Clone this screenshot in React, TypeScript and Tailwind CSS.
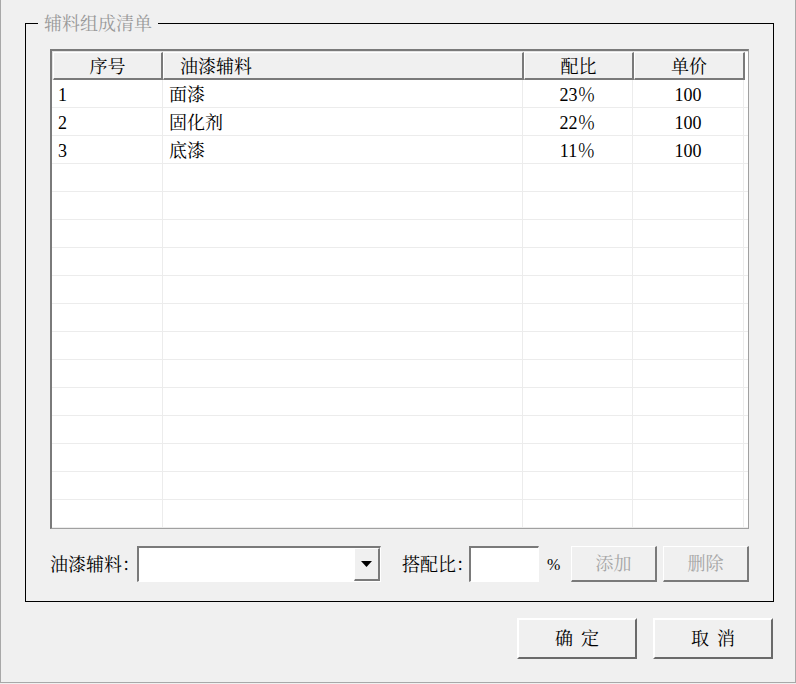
import React from "react";

const FONT = { fontFamily: '"Liberation Serif", "Noto Serif CJK SC", "Noto Sans CJK SC", serif' };

const rows = [
  { id: "1", name: "面漆", ratio: "23％", price: "100" },
  { id: "2", name: "固化剂", ratio: "22％", price: "100" },
  { id: "3", name: "底漆", ratio: "11％", price: "100" },
];

function HeaderCell({ w, children, left }: { w: string; children?: React.ReactNode; left?: boolean }) {
  return (
    <div
      className={`${w} h-full flex items-center pt-[3px] border-t border-l border-white border-r-2 border-b-2 border-r-[#7a7a7a] border-b-[#7a7a7a] bg-[#f0f0f0] ${left ? "justify-start pl-[16px]" : "justify-center"}`}
    >
      {children}
    </div>
  );
}

export default function App() {
  const empty = Array.from({ length: 13 });
  return (
    <div className="w-[796px] h-[684px] bg-[#f0f0f0] text-[18px] text-black" style={FONT}>
      <div className="w-[796px] h-[683px] border-l border-r border-b border-[#a8a8a8] flex flex-col">
        {/* Group box */}
        <div className="relative ml-[24px] mt-[23px] w-[749px] h-[579px] border border-black pl-[24px] pt-[25px] flex flex-col">
          <span className="absolute left-[12px] top-[-12px] px-[6px] bg-[#f0f0f0] text-[#9a9a9a] leading-[24px]">
            辅料组成清单
          </span>

          {/* Table */}
          <div className="w-[699px] h-[480px] border-t-2 border-l-2 border-[#7a7a7a] border-r border-b border-r-[#a0a0a0] border-b-[#a0a0a0] bg-white flex flex-col overflow-hidden">
            <div className="h-[29px] flex shrink-0 bg-[#f0f0f0] border-t border-l border-[#e3e3e3]">
              <HeaderCell w="w-[110px]">序号</HeaderCell>
              <HeaderCell w="w-[361px]" left>
                油漆辅料
              </HeaderCell>
              <HeaderCell w="w-[110px]">配比</HeaderCell>
              <HeaderCell w="w-[111px]">单价</HeaderCell>
              <div className="flex-1 bg-white" />
            </div>
            {rows.map((r) => (
              <div key={r.id} className="h-[28px] flex shrink-0 border-b border-[#ececec]">
                <div className="w-[111px] pl-[6px] pt-[3px] flex items-center border-r border-[#ececec]">{r.id}</div>
                <div className="w-[360px] pl-[6px] pt-[3px] flex items-center border-r border-[#ececec]">{r.name}</div>
                <div className="w-[110px] pt-[3px] flex items-center justify-center border-r border-[#ececec]">{r.ratio}</div>
                <div className="w-[111px] pt-[3px] flex items-center justify-center border-r border-[#ececec]">{r.price}</div>
                <div className="flex-1" />
              </div>
            ))}
            {empty.map((_, i) => (
              <div key={i} className="h-[28px] flex shrink-0 border-b border-[#ececec]">
                <div className="w-[111px] border-r border-[#ececec]" />
                <div className="w-[360px] border-r border-[#ececec]" />
                <div className="w-[110px] border-r border-[#ececec]" />
                <div className="w-[111px] border-r border-[#ececec]" />
                <div className="flex-1" />
              </div>
            ))}
          </div>

          {/* Controls row */}
          <div className="mt-[17px] h-[36px] flex items-center">
            <span className="w-[87px] whitespace-nowrap pt-[2px]">油漆辅料：</span>
            <div className="w-[244px] h-[36px] flex border-t-2 border-l-2 border-[#7a7a7a] border-r border-b border-r-white border-b-white bg-white">
              <div className="flex-1" />
              <div className="w-[26px] h-full flex items-center justify-center bg-[#f0f0f0] border-t border-l border-white border-r-2 border-b-2 border-r-[#7a7a7a] border-b-[#7a7a7a]">
                <svg width="11" height="6" viewBox="0 0 11 6">
                  <polygon points="0,0 11,0 5.5,6" fill="#000" />
                </svg>
              </div>
            </div>
            <span className="ml-[21px] w-[67px] whitespace-nowrap pt-[2px]">搭配比：</span>
            <div className="w-[70px] h-[36px] border-t-2 border-l-2 border-[#7a7a7a] border-r border-b border-r-white border-b-white bg-white" />
            <span className="ml-[8px] w-[24px] text-[16px] pt-[2px]">%</span>
            <button className="w-[86px] h-[36px] flex items-center justify-center pt-[2px] bg-[#f0f0f0] text-[#a6a6a6] border-t border-l border-white border-r-2 border-b-2 border-r-[#7a7a7a] border-b-[#7a7a7a]">
              添加
            </button>
            <button className="ml-[6px] w-[86px] h-[36px] flex items-center justify-center pt-[2px] bg-[#f0f0f0] text-[#a6a6a6] border-t border-l border-white border-r-2 border-b-2 border-r-[#7a7a7a] border-b-[#7a7a7a]">
              删除
            </button>
          </div>
        </div>

        {/* Bottom buttons */}
        <div className="mt-[16px] pr-[22px] flex justify-end gap-[16px]">
          <button className="w-[120px] h-[41px] flex items-center justify-center pt-[2px] bg-[#f0f0f0] border-t-2 border-l-2 border-white border-r-2 border-b-2 border-r-[#6a6a6a] border-b-[#6a6a6a] tracking-[8px] pl-[8px]">
            确定
          </button>
          <button className="w-[120px] h-[41px] flex items-center justify-center pt-[2px] bg-[#f0f0f0] border-t-2 border-l-2 border-white border-r-2 border-b-2 border-r-[#6a6a6a] border-b-[#6a6a6a] tracking-[8px] pl-[8px]">
            取消
          </button>
        </div>
      </div>
    </div>
  );
}
